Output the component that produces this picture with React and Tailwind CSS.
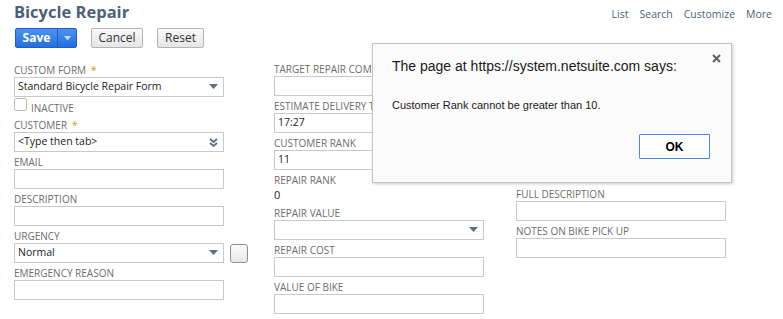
import React from "react";

const Arrow = () => (
  <svg width="9" height="6" viewBox="0 0 9 6" className="shrink-0">
    <path d="M0 0 H9 L4.5 5 Z" fill="#5b6e8c" />
  </svg>
);

const DoubleChevron = () => (
  <svg width="9" height="9" viewBox="0 0 9 9" className="shrink-0">
    <path d="M1 1 L4.5 4 L8 1" fill="none" stroke="#5b6e8c" strokeWidth="1.8" />
    <path d="M1 5 L4.5 8 L8 5" fill="none" stroke="#5b6e8c" strokeWidth="1.8" />
  </svg>
);

const Label = ({ children, required }) => (
  <div className="h-[14px] text-[10px] leading-[14px] uppercase text-[#6d6d6d] whitespace-nowrap">
    {children}
    {required && <span className="text-[#d99400] ml-[5px]">*</span>}
  </div>
);

const Field = ({ label, required, value, dropdown, chevron }) => (
  <div className="mb-[3px]">
    <Label required={required}>{label}</Label>
    <div className="h-[20px] w-[210px] border border-[#c9c9c9] bg-white flex items-center justify-between pl-[3px] pr-[5px] text-[10.5px] text-[#222]">
      <span className="whitespace-nowrap">{value}</span>
      {dropdown && <Arrow />}
      {chevron && <DoubleChevron />}
    </div>
  </div>
);

export default function App() {
  return (
    <div className="relative w-[783px] h-[319px] overflow-hidden bg-white font-['Open_Sans',sans-serif]">
      <div className="flex justify-between items-start pl-[14px] pr-[11px]">
        <h1 className="text-[16.5px] leading-[24px] font-bold text-[#4d5f79]">Bicycle Repair</h1>
        <div className="flex gap-[11px] text-[10.5px] leading-[14px] text-[#4d5f79] mt-[7px]">
          <span>List</span>
          <span>Search</span>
          <span>Customize</span>
          <span>More</span>
        </div>
      </div>

      <div className="flex items-center pl-[15px] mt-[4px] h-[20px]">
        <div className="flex h-[20px] w-[62px] rounded-[2px] border border-[#1d5fc4] bg-gradient-to-b from-[#4a93f0] to-[#2470dc] text-white">
          <div className="w-[42px] flex items-center justify-center text-[12px] font-bold border-r border-[#1d5fc4]">
            Save
          </div>
          <div className="flex-1 flex items-center justify-center">
            <svg width="7" height="5" viewBox="0 0 7 5">
              <path d="M0 0 H7 L3.5 4.5 Z" fill="#c9dcf7" />
            </svg>
          </div>
        </div>
        <div className="ml-[14px] h-[20px] w-[52px] rounded-[2px] border border-[#b4b4b4] bg-gradient-to-b from-[#fafafa] to-[#e6e6e6] flex items-center justify-center text-[12px] text-[#333]">
          Cancel
        </div>
        <div className="ml-[14px] h-[20px] w-[47px] rounded-[2px] border border-[#b4b4b4] bg-gradient-to-b from-[#fafafa] to-[#e6e6e6] flex items-center justify-center text-[12px] text-[#333]">
          Reset
        </div>
      </div>

      <div className="flex pl-[14px] mt-[15px]">
        <div className="w-[260px]">
          <Field label="Custom Form" required value="Standard Bicycle Repair Form" dropdown />
          <div className="h-[18px] flex items-start -mt-[2px]">
            <div className="w-[13px] h-[13px] border border-[#bdbdbd] rounded-[2px] bg-white" />
            <span className="ml-[4px] mt-[5px] text-[10px] leading-[10px] text-[#6d6d6d]">INACTIVE</span>
          </div>
          <div className="mt-[2px]">
            <Field label="Customer" required value="<Type then tab>" chevron />
          </div>
          <Field label="Email" />
          <Field label="Description" />
          <div className="mb-[3px]">
            <Label>Urgency</Label>
            <div className="flex items-center">
              <div className="h-[20px] w-[210px] border border-[#c9c9c9] bg-white flex items-center justify-between pl-[3px] pr-[5px] text-[10.5px] text-[#222]">
                <span>Normal</span>
                <Arrow />
              </div>
              <div className="ml-[6px] w-[18px] h-[19px] rounded-[3px] border border-[#8e8e8e] bg-gradient-to-b from-[#fafafa] to-[#e9e9e9]" />
            </div>
          </div>
          <Field label="Emergency Reason" />
        </div>

        <div className="w-[242px] -mt-[1px]">
          <Field label="Target Repair Completion Date" />
          <Field label="Estimate Delivery Time" value="17:27" />
          <Field label="Customer Rank" value="11" />
          <div className="mb-[3px]">
            <Label>Repair Rank</Label>
            <div className="h-[16px] text-[11px] leading-[16px] text-[#222]">0</div>
          </div>
          <Field label="Repair Value" dropdown />
          <Field label="Repair Cost" />
          <Field label="Value of Bike" />
        </div>

        <div className="w-[230px] mt-[124px]">
          <Field label="Full Description" />
          <Field label="Notes on Bike Pick Up" />
        </div>
      </div>

      <div className="absolute left-[372px] top-[43px] w-[360px] h-[140px] border border-[#c4c4c4] bg-[#fbfbfb] shadow-[1px_1px_3px_rgba(0,0,0,0.2)] font-['Liberation_Sans',sans-serif]">
        <svg width="9" height="9" viewBox="0 0 9 9" className="absolute right-[10px] top-[10px]">
          <path d="M1 1 L8 8 M8 1 L1 8" stroke="#606060" strokeWidth="2" />
        </svg>
        <div className="pl-[19px] pt-[12px] text-[14px] leading-[20px] text-[#1a1a1a]">
          The page at https://system.netsuite.com says:
        </div>
        <div className="pl-[19px] mt-[22px] text-[11px] leading-[14px] text-[#1a1a1a]">
          Customer Rank cannot be greater than 10.
        </div>
        <div className="flex justify-end pr-[21px] mt-[22px]">
          <div className="w-[71px] h-[25px] border border-[#4a88f0] bg-white rounded-[1px] flex items-center justify-center text-[12px] font-bold text-black">
            OK
          </div>
        </div>
      </div>
    </div>
  );
}
